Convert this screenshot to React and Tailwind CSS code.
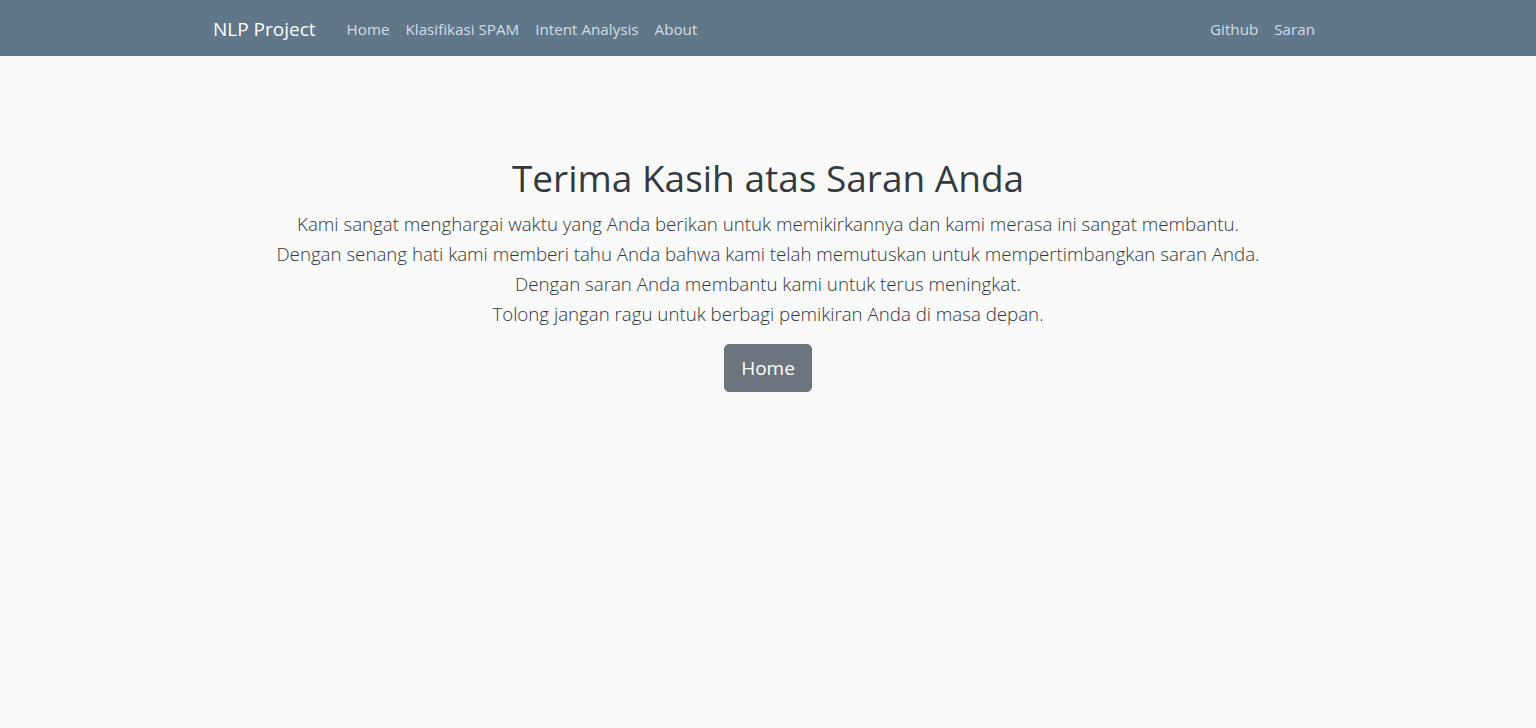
import React from "react";

const links = ["Home", "Klasifikasi SPAM", "Intent Analysis", "About"];

const Navbar = () => {
  return (
    <nav className="bg-[#607689] h-14">
      <div className="mx-auto w-[1140px] px-[15px] h-full flex items-center justify-between pt-[2px]">
        <div className="flex items-center">
          <a className="text-white text-[19px] mr-[23px]">NLP Project</a>
          <ul className="flex items-center">
            {links.map((link) => (
              <li key={link}>
                <a className="px-2 text-[15.2px] text-[#d3dbe2]">{link}</a>
              </li>
            ))}
          </ul>
        </div>
        <ul className="flex items-center">
          <li>
            <a className="px-2 text-[15.2px] text-[#d3dbe2]">Github</a>
          </li>
          <li>
            <a className="px-2 text-[15.2px] text-[#d3dbe2]">Saran</a>
          </li>
        </ul>
      </div>
    </nav>
  );
};

export default function App() {
  return (
    <div
      className="min-h-screen bg-[#fafafa] text-[#343a40]"
      style={{ fontFamily: '"Open Sans", "Noto Sans", sans-serif' }}
    >
      <Navbar />
      <div className="pt-[99px] flex flex-col items-center text-center">
        <h1 className="text-[37px] leading-[46px] font-normal mb-[8px]">
          Terima Kasih atas Saran Anda
        </h1>
        <p className="text-[18.7px] leading-[30px] font-light text-[#30363c]">
          Kami sangat menghargai waktu yang Anda berikan untuk memikirkannya dan kami merasa ini sangat membantu.
          <br />
          Dengan senang hati kami memberi tahu Anda bahwa kami telah memutuskan untuk mempertimbangkan saran Anda.
          <br />
          Dengan saran Anda membantu kami untuk terus meningkat.
          <br />
          Tolong jangan ragu untuk berbagi pemikiran Anda di masa depan.
        </p>
        <button className="mt-[15px] bg-[#6c757d] text-white text-[19px] leading-[30px] px-4 py-2 rounded-[5px] border border-[#6c757d]">
          Home
        </button>
      </div>
    </div>
  );
}
